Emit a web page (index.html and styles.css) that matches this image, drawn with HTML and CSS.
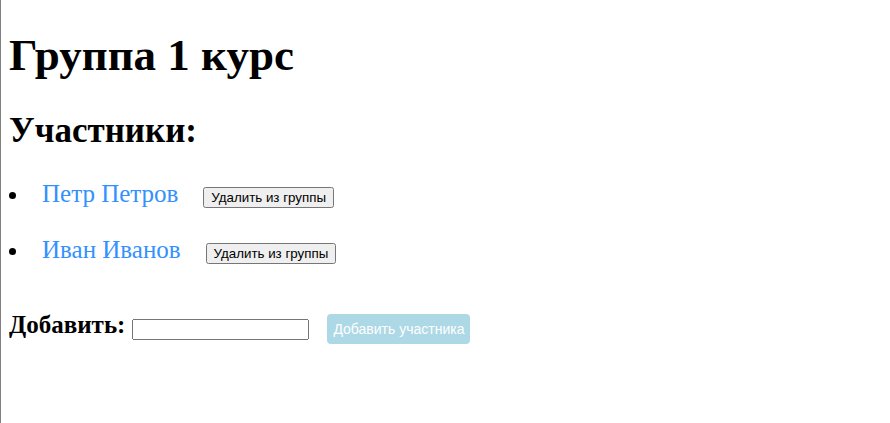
FILE: index.html
```html
<!DOCTYPE html>
<html lang="ru">
<head>
<meta charset="utf-8">
<title>Группа 1 курс</title>
<link rel="stylesheet" href="styles.css">
</head>
<body>
<h1 class="title">Группа 1 курс</h1>
<h2 class="subtitle">Участники:</h2>
<ul class="members">
  <li class="member"><a class="member-name" href="#">Петр Петров</a><button class="remove-btn">Удалить из группы</button></li>
  <li class="member"><a class="member-name" href="#">Иван Иванов</a><button class="remove-btn">Удалить из группы</button></li>
</ul>
<div class="add-row">
  <label class="add-label">Добавить:</label>
  <input class="add-input" type="text">
  <button class="add-btn" disabled>Добавить участника</button>
</div>
</body>
</html>
```
FILE: styles.css
```css
html {
  border-left: 1px solid #808080;
  min-height: 100%;
  box-sizing: border-box;
}
body {
  margin: 8px;
  font-family: "Liberation Serif", "Times New Roman", serif;
  color: #000;
}
.title {
  font-size: 45px;
  margin: 21px 0 30px;
}
.subtitle {
  font-size: 35px;
  margin: 0;
}
.members {
  list-style: disc;
  list-style-position: inside;
  padding-left: 0;
  margin: 29px 0 0;
}
.member {
  font-size: 25px;
  margin-bottom: 28px;
}
.member:last-child {
  margin-bottom: 47px;
}
.member-name {
  color: #3390ff;
  text-decoration: none;
  margin-right: 25px;
}
.remove-btn {
  font-family: "Liberation Sans", Arial, sans-serif;
  font-size: 13.33px;
  vertical-align: baseline;
}
.add-row {
  display: flex;
  align-items: flex-start;
}
.add-label {
  font-size: 25px;
  font-weight: bold;
}
.add-input {
  margin: 8px 0 0 7px;
  width: 177px;
  height: 21px;
  box-sizing: border-box;
}
.add-btn {
  margin: 3px 0 0 18px;
  background: #add8e6;
  color: #fff;
  border: none;
  border-radius: 4px;
  padding: 7px 6px;
  font-family: "Liberation Sans", Arial, sans-serif;
  font-size: 14px;
}
```
